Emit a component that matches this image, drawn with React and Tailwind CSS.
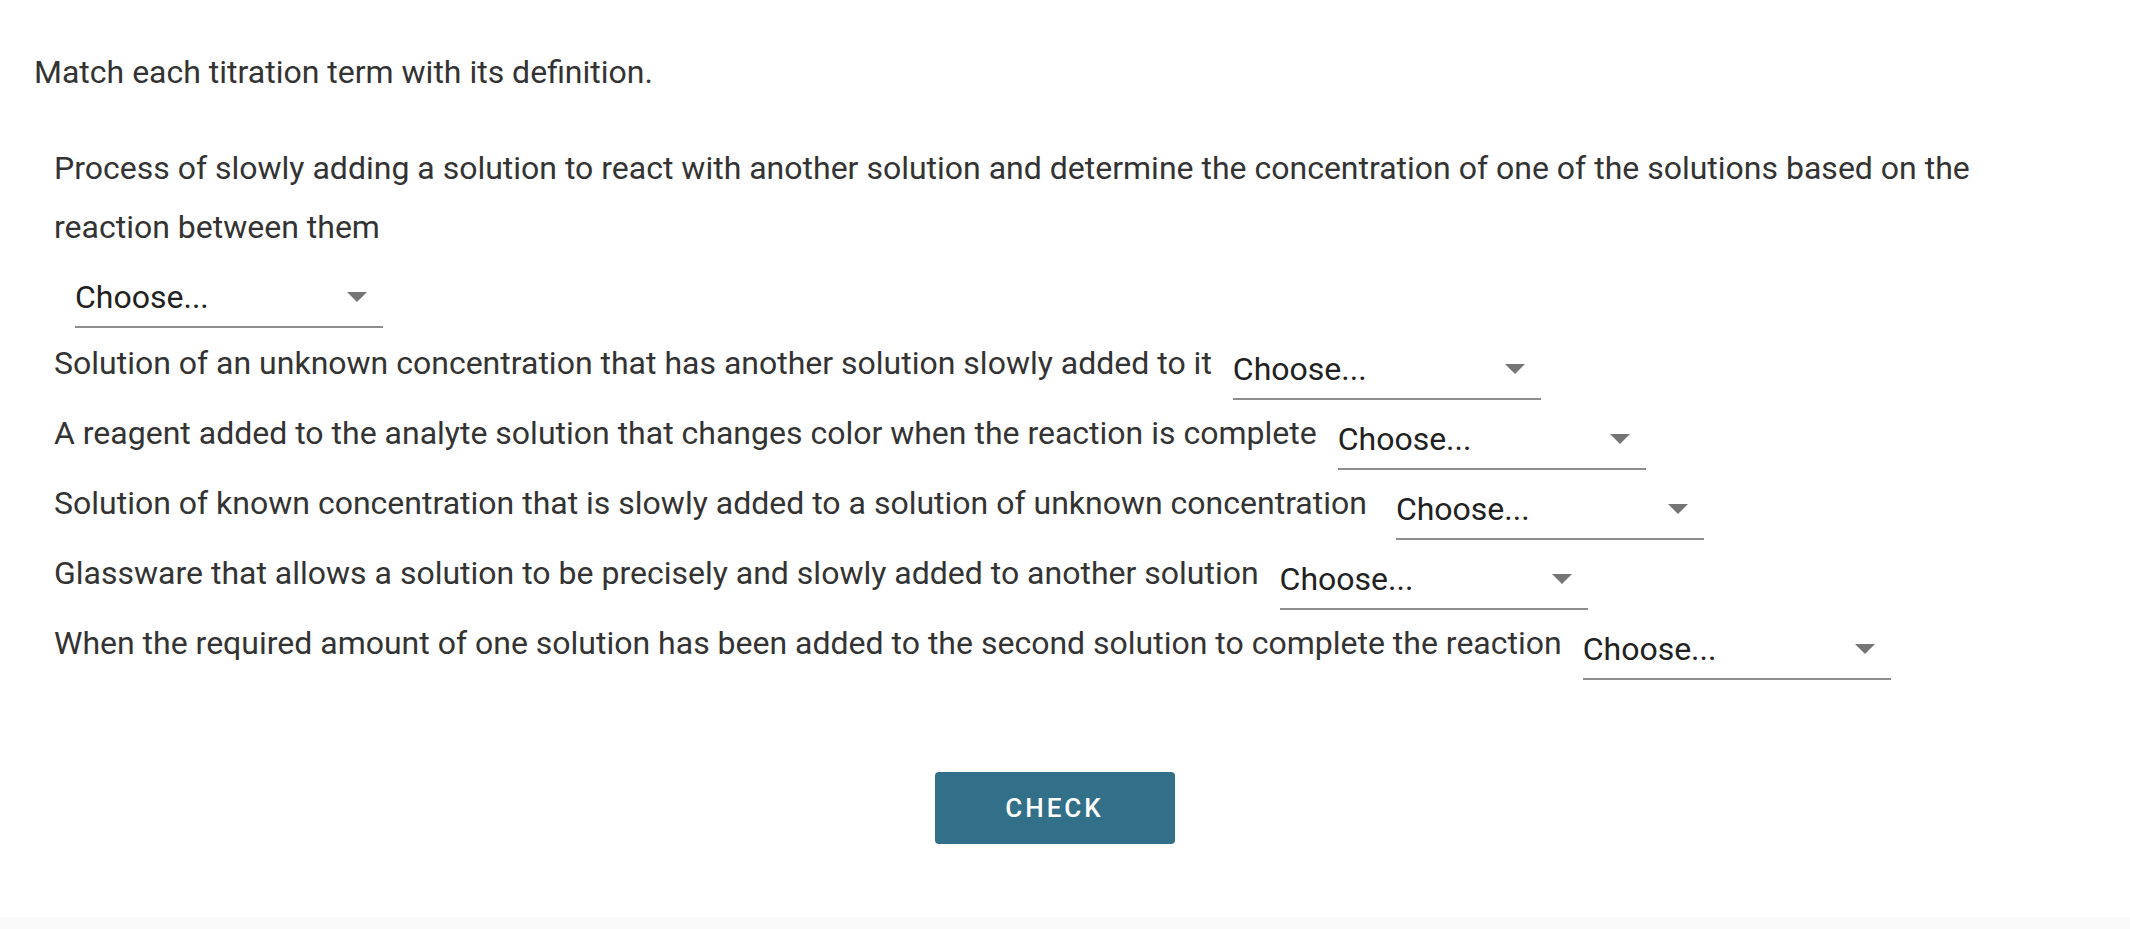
import React, { useState } from 'react';

const terms = [
    'Process of slowly adding a solution to react with another solution and determine the concentration of one of the solutions based on the reaction between them',
    'Solution of an unknown concentration that has another solution slowly added to it',
    'A reagent added to the analyte solution that changes color when the reaction is complete',
    'Solution of known concentration that is slowly added to a solution of unknown concentration ',
    'Glassware that allows a solution to be precisely and slowly added to another solution',
    'When the required amount of one solution has been added to the second solution to complete the reaction',
];

const options = ['Titration', 'Analyte', 'Indicator', 'Titrant', 'Buret', 'Equivalence point'];

// Underlined dropdown with the small filled caret on the right
const Choose = ({ value, onChange, className }) => (
    <div className={`relative w-[308px] h-[60px] shrink-0 border-b-2 border-[#8e8e8e] ${className}`}>
        <select
            value={value}
            onChange={(e) => onChange(e.target.value)}
            className="w-full h-[58px] appearance-none bg-transparent pr-[44px] text-[32px] leading-[58px] text-[#212121] font-['Roboto',sans-serif] outline-none cursor-pointer"
        >
            <option value="">Choose...</option>
            {options.map((o) => (
                <option key={o} value={o}>{o}</option>
            ))}
        </select>
        <svg
            className="pointer-events-none absolute right-[16px] top-[24px]"
            width="20"
            height="10"
            viewBox="0 0 20 10"
        >
            <polygon points="0,0 20,0 10,10" fill="#757575" />
        </svg>
    </div>
);

const App = () => {
    const [answers, setAnswers] = useState(terms.map(() => ''));

    const setAnswer = (i, v) => {
        const next = [...answers];
        next[i] = v;
        setAnswers(next);
    };

    return (
        <div className="min-h-screen flex flex-col bg-white font-['Roboto',sans-serif] text-[#333333]">
            <div className="flex-1 pl-[34px] pr-[55px] pt-[50px]">
                <p className="text-[32px] leading-[45px]">Match each titration term with its definition.</p>

                <div className="mt-[44px] pl-[20px]">
                    {/* first definition is long enough to push its dropdown to a new line */}
                    <div className="flex flex-wrap items-start">
                        <span className="text-[32px] leading-[59px]">{terms[0]}</span>
                        <Choose
                            value={answers[0]}
                            onChange={(v) => setAnswer(0, v)}
                            className="ml-[21px] mt-[11px] mb-[6px]"
                        />
                    </div>
                    {terms.slice(1).map((t, idx) => (
                        <div key={t} className="flex items-start h-[70px]">
                            <span className="text-[32px] leading-[59px] whitespace-pre">{t}</span>
                            <Choose
                                value={answers[idx + 1]}
                                onChange={(v) => setAnswer(idx + 1, v)}
                                className="ml-[21px] mt-[6px]"
                            />
                        </div>
                    ))}
                </div>

                <div className="flex justify-center mt-[88px]">
                    <button
                        type="button"
                        className="w-[240px] h-[72px] rounded-[4px] bg-[#326f88] text-white text-[26px] font-medium tracking-[3px]"
                    >
                        CHECK
                    </button>
                </div>
            </div>
            <div className="h-[12px] bg-[#fafafa]" />
        </div>
    );
};

export default App;
